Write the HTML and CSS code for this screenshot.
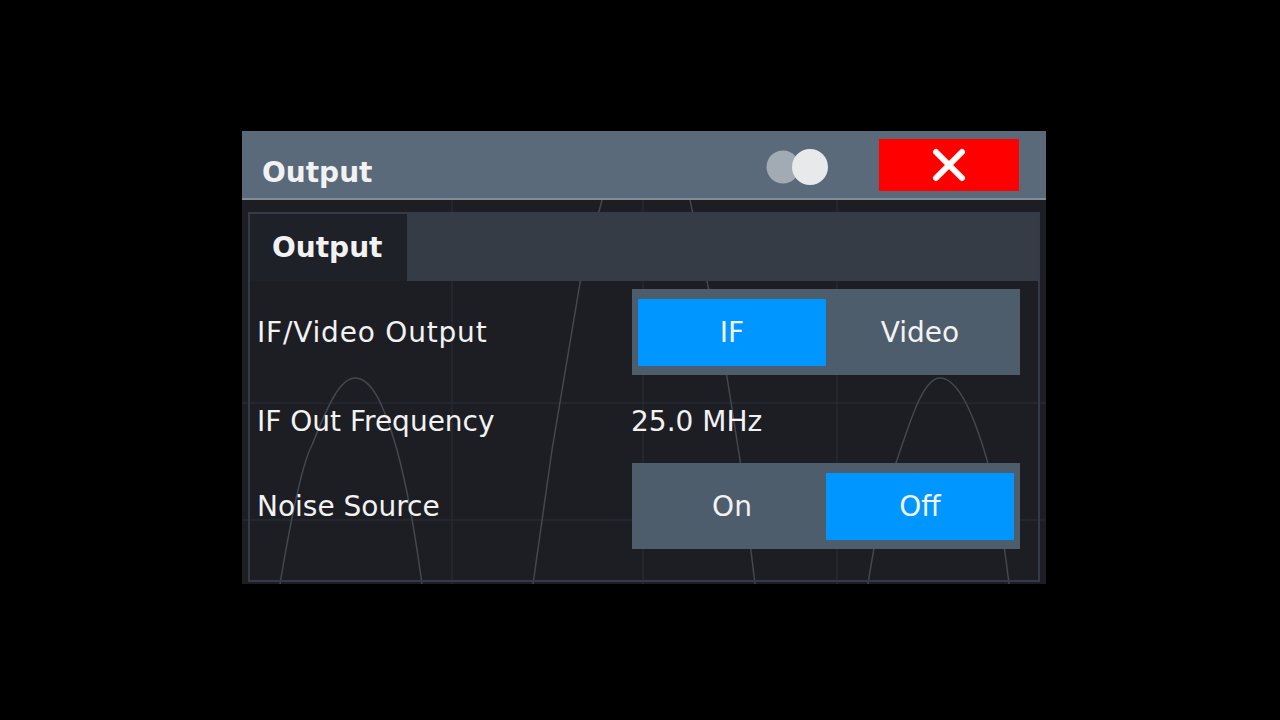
FILE: index.html
```html
<!DOCTYPE html>
<html>
<head>
<meta charset="utf-8">
<link rel="stylesheet" href="styles.css">
</head>
<body>
<div class="dialog">
  <div class="titlebar">
    <span class="title">Output</span>
    <svg class="toggle" width="62" height="38" viewBox="0 0 62 38">
      <circle cx="17" cy="19" r="16.5" fill="#a2aab3"/>
      <circle cx="44" cy="19" r="18" fill="#e7e9eb"/>
    </svg>
    <button class="close" type="button" aria-label="Close">
      <svg width="34" height="34" viewBox="0 0 34 34">
        <path d="M4 4 L30 30 M30 4 L4 30" stroke="#fff" stroke-width="6" stroke-linecap="round"/>
      </svg>
    </button>
  </div>
  <div class="body">
    <svg class="scope" width="804" height="384" viewBox="0 0 804 384">
      <g stroke="#2a2e35" stroke-width="1" fill="none">
        <line x1="210" y1="0" x2="210" y2="384"/>
        <line x1="401" y1="0" x2="401" y2="384"/>
        <line x1="595" y1="0" x2="595" y2="384"/>
        <line x1="0" y1="203" x2="804" y2="203"/>
        <line x1="0" y1="320" x2="804" y2="320"/>
      </g>
      <g stroke="#43474e" stroke-width="1.5" fill="none">
        <path d="M38 384 C52 300 62 260 70 245 C86 205 98 178 113 178 C130 178 142 205 155 250 C166 290 174 340 180 384"/>
        <path d="M360 0 L338 83 L310 250 L291 384"/>
        <path d="M448 0 L485 177 L498 260 L513 384"/>
        <path d="M626 384 C636 320 644 290 655 260 C670 215 682 178 698 178 C716 178 732 215 745 260 C755 300 762 340 767 384"/>
      </g>
    </svg>
    <div class="panel">
      <div class="tabbar">
        <div class="tab active">Output</div>
      </div>
      <div class="content">
        <div class="label wide">IF/Video Output</div>
        <div class="seg">
          <div class="opt on">IF</div>
          <div class="opt">Video</div>
        </div>
        <div class="label freq">IF Out Frequency</div>
        <div class="value">25.0 MHz</div>
        <div class="label">Noise Source</div>
        <div class="seg">
          <div class="opt">On</div>
          <div class="opt on">Off</div>
        </div>
      </div>
    </div>
  </div>
</div>
</body>
</html>
```

FILE: styles.css
```css
html, body {
  margin: 0;
  padding: 0;
  background: #000;
}

body {
  width: 1280px;
  height: 720px;
  overflow: hidden;
  font-family: "DejaVu Sans", "Verdana", sans-serif;
  color: #f2f2f2;
}

.dialog {
  width: 804px;
  height: 453px;
  margin: 131px 0 0 242px;
  display: flex;
  flex-direction: column;
}

.titlebar {
  height: 67px;
  flex: none;
  background: #5a6a7a;
  border-bottom: 2px solid #818c97;
  display: flex;
  align-items: center;
  padding: 0 27px 0 20px;
}

.title {
  font-weight: bold;
  font-size: 28px;
  flex: 1;
  padding-top: 16px;
}

.toggle {
  display: block;
  margin-right: 51px;
  margin-top: 5px;
}

.close {
  width: 140px;
  height: 52px;
  margin-top: 0;
  border: none;
  padding: 0;
  background: #ff0000;
  display: flex;
  align-items: center;
  justify-content: center;
}

.close svg {
  display: block;
}

.body {
  flex: 1;
  position: relative;
  background: #1c1e24;
  padding: 12px 6px 2px 6px;
  display: flex;
}

.scope {
  position: absolute;
  left: 0;
  top: 0;
  z-index: 0;
}

.panel {
  position: relative;
  z-index: 1;
  flex: 1;
  border: 2px solid #343b46;
  display: flex;
  flex-direction: column;
}

.tabbar {
  height: 67px;
  flex: none;
  background: #363c46;
  display: flex;
}

.tab {
  width: 157px;
  box-sizing: border-box;
  padding: 17px 0 0 22px;
  font-weight: bold;
  font-size: 28px;
}

.tab.active {
  background: #1e2127;
}

.content {
  padding: 8px 0 0 7px;
  display: grid;
  grid-template-columns: 375px 388px;
  grid-template-rows: 86px 88px 86px;
  align-items: center;
}

.label {
  font-size: 28px;
}

.label.wide {
  letter-spacing: 0.8px;
}

.label.freq {
  padding-top: 4px;
}

.value {
  font-size: 28px;
  margin-left: -1px;
  padding-top: 4px;
}

.seg {
  height: 86px;
  box-sizing: border-box;
  background: #4e5d6c;
  padding: 10px 6px 9px 6px;
  display: grid;
  grid-template-columns: 1fr 1fr;
}

.opt {
  display: flex;
  align-items: center;
  justify-content: center;
  font-size: 28px;
}

.opt.on {
  background: #0096ff;
}
```
